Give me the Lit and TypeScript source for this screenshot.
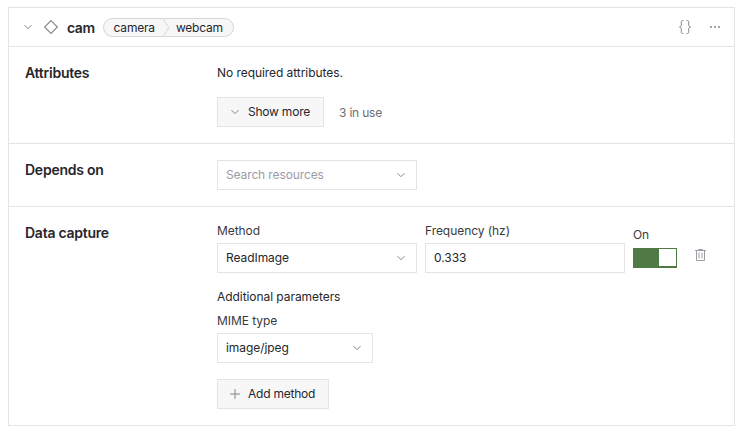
import { LitElement, html, css } from "lit";
import { customElement } from "lit/decorators.js";

const chevron = (size = 10) => html`<svg class="chev" width="${size}" height="${size}" viewBox="0 0 10 10" fill="none"><path d="M1.5 3.2 5 6.7l3.5-3.5" stroke="currentColor" stroke-width="1"/></svg>`;

@customElement("app-root")
export class AppRoot extends LitElement {
  static styles = css`
    :host { display: block; box-sizing: border-box; width: 745px; height: 433px; padding: 7px 10px 0 8px; background: #fff;
      font-family: Inter, "Liberation Sans", sans-serif; font-size: 12px; color: #26262b; letter-spacing: -0.06px; }
    * { box-sizing: border-box; }
    .card { border: 1px solid #e4e4e6; height: 419px; display: flex; flex-direction: column; }
    .head { height: 39px; flex: none; display: flex; align-items: center; padding: 0 13px 0 14px; border-bottom: 1px solid #e4e4e6; }
    .head .chev { color: #85858c; }
    .diamond { margin-left: 10px; color: #85858c; display: block; }
    .name { font-weight: 600; font-size: 14px; margin-left: 8px; letter-spacing: -0.45px; }
    .pill { margin-left: 8px; height: 19px; display: flex; align-items: center; border: 1px solid #d6d6d9; border-radius: 10px; background: #f7f7f8; letter-spacing: -0.2px; }
    .pill span { padding: 0 10px 0 7px; line-height: 17px; }
    .pill span:first-child { padding: 0 8px 0 10px; }
    .pill svg { display: block; flex: none; width: 7px; height: 17px; margin-right: -1px; }
    .actions { margin-left: auto; display: flex; align-items: center; gap: 18px; color: #85858c; }
    .actions svg { display: block; }
    .sec { display: grid; grid-template-columns: 192px 1fr; padding: 0 16px; border-bottom: 1px solid #e4e4e6; flex: none; }
    .sec:last-child { border-bottom: 0; }
    .title { font-weight: 600; font-size: 14px; letter-spacing: -0.25px; line-height: 20px; }
    .attrs { height: 97px; padding-top: 16px; }
    .attrs .body { padding-top: 2px; }
    .depends { height: 63px; padding-top: 16px; }
    .capture { flex: 1; padding-top: 16px; }
    .line { line-height: 16px; }
    .row { display: flex; align-items: center; gap: 15px; margin-top: 16px; }
    .btn { height: 30px; display: inline-flex; align-items: center; gap: 8px; padding: 0 13px 0 12px; background: #f7f7f8; border: 1px solid #e4e4e6; color: #26262b; letter-spacing: -0.22px; }
    .btn svg { color: #85858c; display: block; }
    .txt { margin-bottom: 2px; }
    .muted { color: #6d6d74; letter-spacing: -0.2px; }
    .sel { height: 30px; display: flex; align-items: center; justify-content: space-between; padding: 0 10px 0 8px; border: 1px solid #e4e4e6; background: #fff; }
    .sel .chev { color: #85858c; }
    .w200 { width: 200px; }
    .ph { color: #9c9ca8; letter-spacing: -0.12px; }
    .fields { display: flex; gap: 8px; align-items: flex-start; }
    .lbl { display: block; line-height: 16px; margin-bottom: 4px; color: #3a3a40; }
    .input { width: 200px; height: 30px; border: 1px solid #e4e4e6; padding: 0 8px; display: flex; align-items: center; }
    .toggle-wrap { padding-top: 4px; }
    .toggle-wrap .lbl { margin-bottom: 5px; }
    .toggle { width: 44px; height: 20px; background: #4f7a45; display: flex; justify-content: flex-end; padding: 1px 1px 2px; }
    .toggle i { display: block; width: 17px; height: 17px; background: #fff; }
    .trash { color: #9c9ca4; display: block; margin: 26px 0 0 10px; }
    .params { margin-top: 16px; line-height: 16px; }
    .mime { margin-top: 8px; }
    .mime .sel { width: 156px; }
    .add { margin-top: 16px; }
  `;
  render() {
    return html`<div class="card">
      <div class="head">
        ${chevron()}
        <svg class="diamond" width="16" height="16" viewBox="0 0 16 16" fill="none"><path d="M8 1.6 14.4 8 8 14.4 1.6 8Z" stroke="currentColor" stroke-width="1.1"/></svg>
        <span class="name">cam</span>
        <div class="pill"><span>camera</span><svg viewBox="0 0 7 17" fill="none"><path d="M0 0l6 8.5L0 17" stroke="#d6d6d9"/></svg><span>webcam</span></div>
        <div class="actions">
          <svg width="12" height="14" viewBox="0 0 12 14" fill="none" stroke="currentColor" stroke-width="1"><path d="M4.5.5C2.6.5 2.3 1 2.3 2.2v3C2.3 6.2 1.5 7 .5 7c1 0 1.8.8 1.8 1.8v3c0 1.2.3 1.7 2.2 1.7M7.5.5c1.9 0 2.2.5 2.2 1.7v3c0 1 .8 1.8 1.8 1.8-1 0-1.8.8-1.8 1.8v3c0 1.2-.3 1.7-2.2 1.7"/></svg>
          <svg width="12" height="4" viewBox="0 0 12 4" fill="currentColor"><circle cx="2" cy="2" r="1"/><circle cx="6" cy="2" r="1"/><circle cx="10" cy="2" r="1"/></svg>
        </div>
      </div>
      <section class="sec attrs">
        <div class="title">Attributes</div>
        <div class="body">
          <div class="line">No required attributes.</div>
          <div class="row"><span class="btn">${chevron()}<span class="txt">Show more</span></span><span class="muted">3 in use</span></div>
        </div>
      </section>
      <section class="sec depends">
        <div class="title">Depends on</div>
        <div class="sel w200"><span class="ph txt">Search resources</span>${chevron()}</div>
      </section>
      <section class="sec capture">
        <div class="title">Data capture</div>
        <div>
          <div class="fields">
            <div class="field"><span class="lbl">Method</span><div class="sel w200"><span class="txt">ReadImage</span>${chevron()}</div></div>
            <div class="field"><span class="lbl">Frequency (hz)</span><div class="input"><span class="txt">0.333</span></div></div>
            <div class="toggle-wrap"><span class="lbl">On</span><div class="toggle"><i></i></div></div>
            <svg class="trash" width="11" height="12" viewBox="0 0 11 12" fill="none" stroke="currentColor"><path d="M0 1.5h11M3.5 1.5V.5h4v1M1.5 1.5v10h8v-10M4 3.5v6M7 3.5v6"/></svg>
          </div>
          <div class="params">Additional parameters</div>
          <div class="mime"><span class="lbl">MIME type</span><div class="sel"><span class="txt">image/jpeg</span>${chevron()}</div></div>
          <div class="add"><span class="btn"><svg width="10" height="10" viewBox="0 0 10 10" stroke="currentColor" fill="none"><path d="M5 0v10M0 5h10"/></svg><span class="txt">Add method</span></span></div>
        </div>
      </section>
    </div>`;
  }
}
